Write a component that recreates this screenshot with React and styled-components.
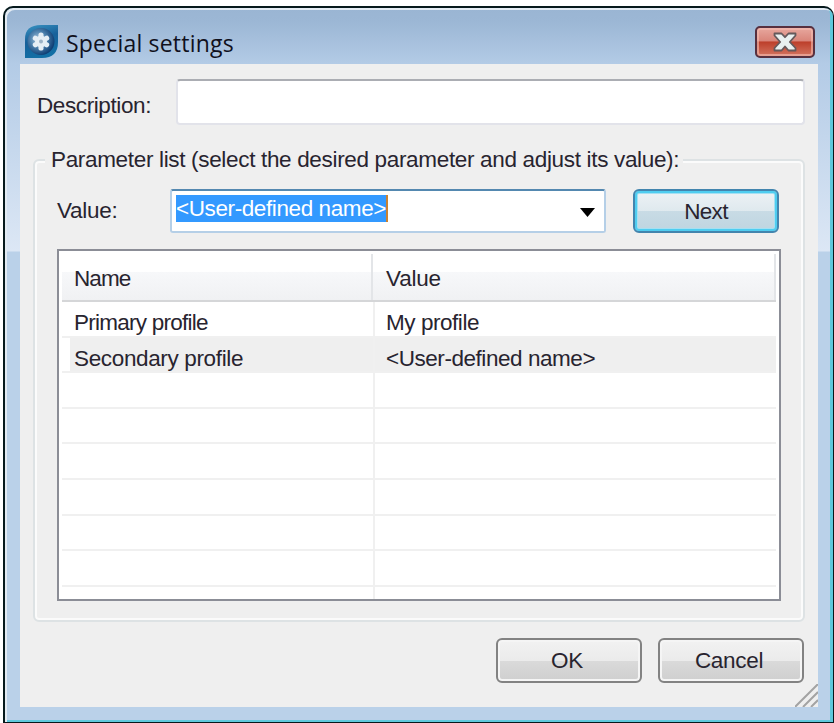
import React, { useState } from "react";
import styled, { createGlobalStyle } from "styled-components";

const params = [
  { name: "Primary profile", value: "My profile", track: -0.75 },
  { name: "Secondary profile", value: "<User-defined name>", track: -0.35 },
];
const EMPTY_ROWS = 7;

const AppIcon = () => (
  <svg width="35" height="35" viewBox="0 0 35 35">
    <defs>
      <linearGradient id="leaf" x1="0" y1="0" x2="0.3" y2="1">
        <stop offset="0" stopColor="#3a94c2" />
        <stop offset="0.5" stopColor="#17609a" />
        <stop offset="1" stopColor="#126fa5" />
      </linearGradient>
      <radialGradient id="glow" cx="0.4" cy="0.42" r="0.6">
        <stop offset="0" stopColor="#a9c4dc" />
        <stop offset="0.5" stopColor="#4f82ae" />
        <stop offset="1" stopColor="#0f3f75" />
      </radialGradient>
    </defs>
    <path d="M1 34V15Q1 1 17 1H34V18Q34 34 18 34Z" fill="url(#leaf)" />
    <circle cx="17" cy="17.5" r="13.5" fill="url(#glow)" />
    <g fill="#e6eef5">
      {[0, 60, 120, 180, 240, 300].map((a) => (
        <circle
          key={a}
          cx="17"
          cy="11"
          r="2.6"
          transform={`rotate(${a} 17 17.5)`}
        />
      ))}
      <circle cx="17" cy="17.5" r="6" />
    </g>
    <circle cx="17" cy="17.5" r="2" fill="#9db2c6" />
  </svg>
);

const CloseIcon = () => (
  <svg width="26" height="20" viewBox="0 0 26 20">
    <path
      d="M2.5 1.5H9.5L13 5.2L16.5 1.5H23.5V3.5L17.8 10L23.5 16V18.5H16.5L13 14.5L9.5 18.5H2.5V16L8.2 10L2.5 3.5Z"
      fill="#e9f0f0"
      stroke="#65595b"
      strokeWidth="1.8"
      strokeLinejoin="round"
    />
  </svg>
);

const Grip = () => (
  <GripSvg width="23" height="23" viewBox="0 0 23 23">
    <path d="M0 23L23 0M8 23L23 8M16 23L23 16" stroke="#a3a3a3" strokeWidth="2" />
  </GripSvg>
);

const App = () => {
  const [description, setDescription] = useState("");

  return (
    <>
      <GlobalStyle />
      <Frame>
        <TitleBar>
          <AppIcon />
          <Title>Special settings</Title>
          <CloseBtn aria-label="Close">
            <CloseIcon />
          </CloseBtn>
        </TitleBar>
        <Body>
          <DescriptionRow>
            <Text $track={-0.4}>Description:</Text>
            <Input
              value={description}
              onChange={(e) => setDescription(e.target.value)}
            />
          </DescriptionRow>
          <Group>
            <Legend>
              <Text $track={-0.33}>
                Parameter list (select the desired parameter and adjust its
                value):
              </Text>
            </Legend>
            <ValueRow>
              <Text $track={-0.3}>Value:</Text>
              <Combo>
                <Selected>
                  <Text $track={-0.4}>&lt;User-defined name&gt;</Text>
                </Selected>
                <Arrow width="15" height="9" viewBox="0 0 15 9">
                  <path d="M0 0H15L7.5 9Z" fill="#000" />
                </Arrow>
              </Combo>
              <NextButton>
                <Text>Next</Text>
              </NextButton>
            </ValueRow>
            <Table>
              <HeaderRow>
                <HeaderCell>
                  <Text $track={-0.9}>Name</Text>
                </HeaderCell>
                <HeaderCell>
                  <Text $track={-0.2}>Value</Text>
                </HeaderCell>
              </HeaderRow>
              {params.map((p, i) => (
                <Row key={p.name} $selected={i === 1}>
                  <Cell>
                    <Text $track={p.track}>{p.name}</Text>
                  </Cell>
                  <Cell>
                    <Text $track={-0.45}>{p.value}</Text>
                  </Cell>
                </Row>
              ))}
              {Array.from({ length: EMPTY_ROWS }, (_, i) => (
                <Row key={i}>
                  <Cell />
                  <Cell />
                </Row>
              ))}
            </Table>
          </Group>
          <Buttons>
            <Button>
              <Text $track={-0.3}>OK</Text>
            </Button>
            <Button>
              <Text $track={-0.3}>Cancel</Text>
            </Button>
          </Buttons>
          <Grip />
        </Body>
      </Frame>
    </>
  );
};

export default App;

const GlobalStyle = createGlobalStyle`
  * {
    box-sizing: border-box;
  }
  body {
    margin: 0;
    background: #fff;
    overflow: hidden;
    font-family: "Liberation Sans", Arial, sans-serif;
    color: #28242f;
  }
  #root {
    display: flow-root;
  }
`;

const Text = styled.span`
  font-size: 22.5px;
  line-height: 26px;
  letter-spacing: ${(p) => p.$track ?? -0.65}px;
  white-space: nowrap;
`;

const Frame = styled.div`
  display: flex;
  flex-direction: column;
  width: 831px;
  height: 717px;
  margin: 6px 0 0 3px;
  border: solid #06191c;
  border-width: 2px 1px 1px 2px;
  border-radius: 10px 10px 0 0;
  background: linear-gradient(
    #9ab5d3 0,
    #9cb7d5 14px,
    #b3cbe6 56px,
    #dce7f5 243px,
    #bad1e9 244px
  );
  box-shadow: inset 2px 2px 0 #e3ebf3, inset -3px -2px 0 #5fc8dc;
`;

const TitleBar = styled.div`
  display: flex;
  flex: 0 0 56px;
  align-items: flex-start;
  padding: 16px 18px 0 19px;
`;

const Title = styled.span`
  flex: 1;
  margin: 3px 0 0 7px;
  font-family: "Open Sans", sans-serif;
  font-size: 23px;
  line-height: 32px;
  letter-spacing: 0.2px;
  color: #10101c;
`;

const CloseBtn = styled.button`
  display: flex;
  align-items: center;
  justify-content: center;
  width: 60px;
  height: 32px;
  margin-top: 2px;
  padding: 0;
  border: 2px solid #57303f;
  border-radius: 5px;
  background: linear-gradient(#e7a79e 0, #d9857a 46%, #bd3f2b 50%, #d37460 100%);
  box-shadow: inset 0 0 0 2px rgba(245, 190, 180, 0.6);
`;

const Body = styled.div`
  position: relative;
  flex: 1;
  margin: 0 15px 15px;
  padding: 15px 13px 0;
  background: #efefef;
`;

const DescriptionRow = styled.div`
  display: grid;
  grid-template-columns: 139px 1fr;
  align-items: center;
  padding-left: 4px;

  > span {
    padding-top: 7px;
  }
`;

const Input = styled.input`
  width: 100%;
  height: 46px;
  padding: 0 8px;
  border: 2px solid #e2e3ea;
  border-top-color: #abadb3;
  border-radius: 4px;
  background: #fff;
  font: inherit;
  font-size: 22.5px;
  outline: none;
`;

const Group = styled.fieldset`
  width: 772px;
  height: 475px;
  min-width: 0;
  margin: 22px 0 0;
  padding: 16px 22px 0;
  border: 2px solid #dde2e4;
  border-radius: 6px;
  box-shadow: inset 0 0 0 2px #fbfbfb;
`;

const Legend = styled.legend`
  height: 26px;
  margin-left: -12px;
  padding: 0 4px 0 6px;
  background: #efefef;
`;

const ValueRow = styled.div`
  display: grid;
  grid-template-columns: 113px 436px 173px;
  align-items: center;
`;

const Combo = styled.div`
  display: flex;
  align-items: flex-start;
  justify-content: space-between;
  height: 44px;
  padding: 4px 9px 0 4px;
  border: 2px solid #b5cfe7;
  border-top-color: #5488b0;
  border-radius: 3px;
  background: #fff;
`;

const Selected = styled.div`
  height: 27px;
  padding-top: 1px;
  border-right: 2px solid #c98232;
  background: #3399ff;
  color: #fff;
`;

const Arrow = styled.svg`
  margin-top: 13px;
`;

const Buttons = styled.div`
  display: flex;
  justify-content: flex-end;
  gap: 16px;
  margin: 16px 1px 0 0;
`;

const Button = styled.button`
  width: 146px;
  height: 45px;
  padding: 0 4px 0 0;
  border: 2px solid #828282;
  border-radius: 6px;
  background: linear-gradient(#f2f2f2 0, #ebebeb 50%, #dadada 51%, #cfcfcf 100%);
  box-shadow: inset 0 0 0 2px #f5f5f5;
  font-family: inherit;
  color: inherit;
`;

const NextButton = styled(Button)`
  height: 44px;
  margin-left: 27px;
  padding: 2px 0 0;
  border-color: #4385ae;
  background: linear-gradient(#edf2f5 0, #dfe9ee 50%, #c8dbe5 51%, #bfd5e0 100%);
  box-shadow: inset 0 0 0 2px #4fcdf0, inset 0 0 0 3px #a5e0f2;
`;

const Table = styled.div`
  width: 724px;
  height: 352px;
  margin-top: 16px;
  padding: 3px 3px 0;
  border: 2px solid #8b8d96;
  background: #fff;
  overflow: hidden;
`;

const HeaderRow = styled.div`
  display: grid;
  grid-template-columns: 311px 1fr;
  height: 48px;
  border-bottom: 2px solid #d5d6d8;
  background: linear-gradient(#fff 0, #fff 38%, #f7f8fa 39%, #f0f1f3 100%);
`;

const HeaderCell = styled.div`
  padding: 12px 0 0 12px;
  border-right: 2px solid #e3e5e8;

  & + & {
    padding-left: 13px;
  }
`;

const Row = styled.div`
  display: grid;
  grid-template-columns: 303px 1fr;
  height: 35.6px;
  padding-left: 8px;
  border-bottom: 2px solid #f0f0f0;
  background: ${(p) =>
    p.$selected ? "linear-gradient(90deg, #fff 8px, #efefef 8px)" : "#fff"};
`;

const Cell = styled.div`
  padding: 8px 0 0 4px;

  & + & {
    padding-left: 11px;
    border-left: 2px solid #f0f0f0;
  }
`;

const GripSvg = styled.svg`
  position: absolute;
  right: 0;
  bottom: 0;
`;
